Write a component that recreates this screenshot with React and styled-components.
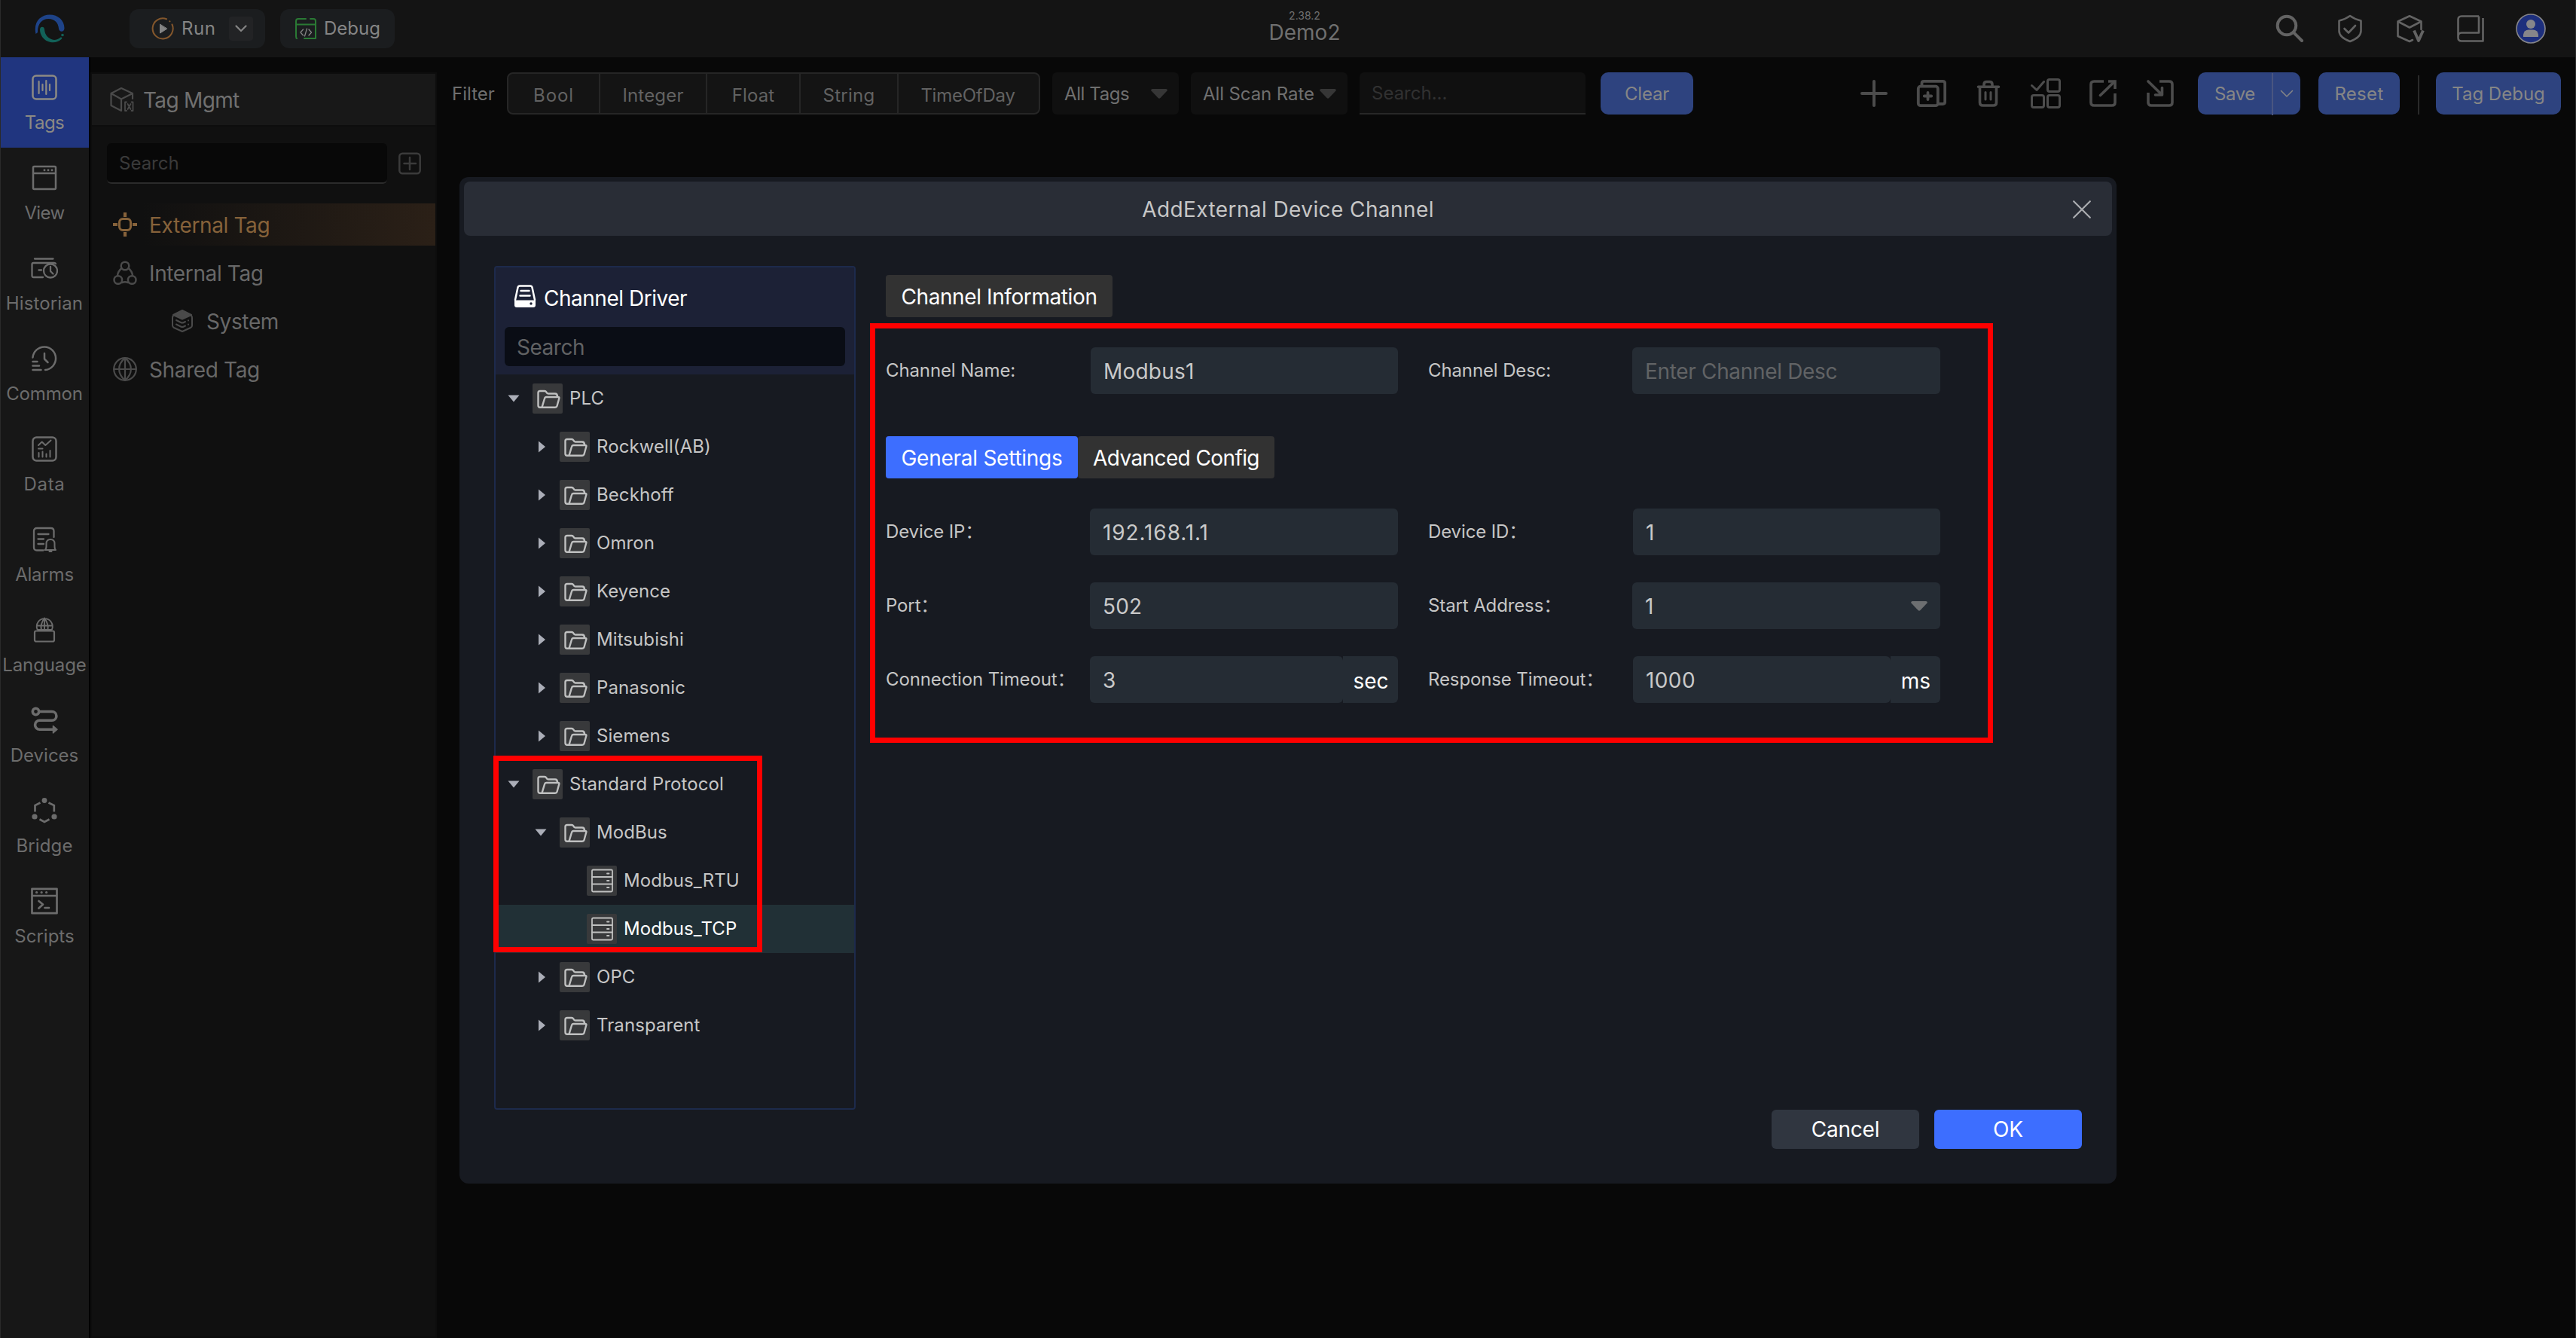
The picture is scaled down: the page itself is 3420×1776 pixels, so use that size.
import React from "react";
// Styles
import styled, { createGlobalStyle, css } from "styled-components";

// #region styled-components
const GlobalStyle = createGlobalStyle`
  * {
    box-sizing: border-box;
  }

  body {
    margin: 0;
    background: #080808;
    font-family: Inter, "Noto Sans CJK SC", sans-serif;
    font-size: 24px;
    line-height: 28px;
  }

  input,
  button {
    font: inherit;
    letter-spacing: inherit;
    border: 0;
    outline: 0;
  }

  svg {
    display: block;
    flex: none;
  }
`;

const Page = styled.div`
  position: relative;
  display: flex;
  flex-direction: column;
  width: 100%;
  height: 1776px;
  overflow: hidden;
  color: #6f6f6f;
  white-space: nowrap;

  &::after {
    content: "";
    position: absolute;
    inset: 0;
    border: solid #2a2a2a;
    border-width: 0 1px;
    pointer-events: none;
  }
`;

const TopBar = styled.header`
  display: grid;
  grid-template-columns: 1fr auto 1fr;
  height: 76px;
  padding-left: 44px;
  background: #141414;
`;

const TopLeft = styled.div`
  display: flex;
  align-items: center;
  gap: 20px;
  padding-left: 2px;
`;

const LogoBox = styled.div`
  width: 106px;
`;

const PillButton = styled.button`
  display: flex;
  align-items: center;
  gap: ${({ $gap }) => $gap};
  width: ${({ $width }) => $width};
  height: 52px;
  padding: ${({ $padding }) => $padding};
  border-radius: 12px;
  background: #1b1d1f;
  color: #858585;
  letter-spacing: ${({ $spacing }) => $spacing || 0};
`;

const PillArrow = styled.span`
  display: grid;
  place-items: center;
  width: 32px;
  height: 32px;
  margin-left: auto;
  border-radius: 4px;
  background: #222325;
`;

const ProjectTitle = styled.div`
  padding-top: 13px;
  text-align: center;
  font-size: 28px;

  small {
    display: block;
    font-size: 14px;
    line-height: 16px;
  }
`;

const TopActions = styled.div`
  display: flex;
  align-items: center;
  justify-content: flex-end;
  gap: 40px;
  padding-right: 40px;
  color: #636363;
`;

const Body = styled.div`
  display: flex;
  flex: 1;
  min-height: 0;
`;

const SideNav = styled.nav`
  width: 120px;
  border-right: 2px solid #000;
  background: #171717;
`;

const NavItem = styled.a`
  display: flex;
  flex-direction: column;
  align-items: center;
  gap: 13px;
  height: 120px;
  padding-top: 20px;
  letter-spacing: ${({ $spacing }) => $spacing || 0};
  background: ${({ $active }) => ($active ? "#20357f" : "transparent")};
  color: ${({ $active }) => ($active ? "#8c8a84" : "#6c6c6c")};
`;

const NavIcon = styled.span`
  display: grid;
  place-items: center;
  width: 40px;
  height: 40px;
`;

const TagPanel = styled.aside`
  width: 460px;
  margin-top: 20px;
  border: 2px solid #0d0d0d;
  background: #101010;
  font-size: 28px;
  line-height: 34px;
  letter-spacing: -0.37px;
`;

const TagPanelHead = styled.div`
  display: flex;
  align-items: center;
  gap: 12px;
  height: 70px;
  padding-left: 24px;
  border-bottom: 2px solid #0d0d0d;
  background: #181818;
  color: #707070;
  letter-spacing: -0.68px;

  svg {
    color: #4a4a4a;
  }
`;

const TagSearchRow = styled.div`
  display: flex;
  align-items: center;
  gap: 15px;
  padding: 22px 19px 26px 20px;
  color: #3b3b3b;
`;

const TagSearch = styled.input`
  width: 372px;
  height: 54px;
  padding: 0 16px;
  border-bottom: 2px solid #2b2b2b;
  border-radius: 6px;
  background: #080808;
  font-size: 24px;
  letter-spacing: 0;

  &::placeholder {
    color: #3a3a3a;
  }
`;

const TagItem = styled.div`
  display: flex;
  align-items: center;
  gap: ${({ $nested }) => ($nested ? "18px" : "16px")};
  height: 56px;
  margin-bottom: 8px;
  padding-left: ${({ $nested }) => ($nested ? "106px" : "28px")};
  color: #686868;

  svg {
    color: #4a4a4a;
  }

  ${({ $active }) =>
    $active &&
    css`
      background: linear-gradient(90deg, #101010 15%, #2b2017);
      color: #86623a;

      svg {
        color: #86623a;
      }
    `}
`;

const TagName = styled.span`
  padding-top: 2px;
`;

const Main = styled.main`
  flex: 1;
  padding: 20px 20px 0;
  background: #080808;
`;

const Toolbar = styled.div`
  display: flex;
  align-items: center;
  height: 56px;
`;

const FilterLabel = styled.span`
  width: 73px;
  padding-top: 1px;
`;

const TypeGroup = styled.div`
  display: flex;
  width: 708px;
  height: 56px;
  border: 2px solid #262626;
  border-radius: 8px;
  background: #141414;
  color: #626262;
`;

const TypeCell = styled.div`
  display: flex;
  align-items: center;
  justify-content: center;
  width: ${({ $width }) => $width}px;
  padding: 5px 2px 0 0;
  letter-spacing: ${({ $spacing }) => $spacing || 0};

  & + & {
    box-shadow: -2px 0 0 #262626;
  }
`;

const FilterSelect = styled.div`
  display: flex;
  align-items: center;
  justify-content: space-between;
  width: ${({ $width }) => $width}px;
  height: 56px;
  margin-left: 16px;
  padding: 1px 15px 0 16px;
  border-radius: 6px;
  background: #101010;
  letter-spacing: ${({ $spacing }) => $spacing || 0};

  svg {
    color: #363636;
  }
`;

const FilterSearch = styled.input`
  width: 300px;
  height: 56px;
  margin: 0 20px 0 16px;
  padding: 0 16px;
  border-bottom: 2px solid #272727;
  border-radius: 6px 6px 0 0;
  background: #101010;

  &::placeholder {
    color: #313131;
  }
`;

const ToolButton = styled.button`
  display: flex;
  align-items: center;
  justify-content: center;
  width: ${({ $width }) => $width}px;
  height: 56px;
  padding: 1px 0 0;
  border-radius: 10px;
  background: #2e437f;
  color: #868686;
  letter-spacing: ${({ $spacing }) => $spacing || 0};
`;

const SplitMain = styled.span`
  flex: 1;
`;

const SplitArrow = styled.span`
  display: grid;
  place-items: center;
  width: 38px;
  height: 56px;
  border-left: 2px solid #4a5681;
`;

const ToolIcons = styled.div`
  display: flex;
  gap: 36px;
  margin: 0 30px 0 auto;
  color: #4c4c4c;
`;

const ToolGroup = styled.div`
  display: flex;
  align-items: flex-end;
  gap: 24px;
`;

const ToolDivider = styled.i`
  width: 2px;
  height: 52px;
  margin-right: -2px;
  background: #2a2a2a;
`;

const Overlay = styled.div`
  position: absolute;
  inset: 0;
  display: flex;
  align-items: flex-start;
  justify-content: center;
  padding-top: 235px;
`;

const Modal = styled.section`
  position: relative;
  width: 2200px;
  height: 1336px;
  padding: 6px;
  border-radius: 12px;
  background: #171a21;
  color: #c6c6c6;
`;

const ModalHead = styled.div`
  display: grid;
  grid-template-columns: 1fr auto 1fr;
  align-items: center;
  height: 72px;
  padding: 2px 28px 0;
  border-radius: 8px;
  background: #292d36;
  font-size: 28px;
  letter-spacing: 0.41px;

  h2 {
    grid-column: 2;
    margin: 0;
    font: inherit;
  }

  svg {
    justify-self: end;
    color: #a9abaf;
  }
`;

const ModalBody = styled.div`
  display: flex;
  gap: 40px;
  padding: 40px 40px 0;
`;

const DriverPanel = styled.div`
  width: 480px;
  height: 1120px;
  border: 2px solid #1d2a4c;
  border-radius: 4px;
`;

const DriverHead = styled.div`
  height: 142px;
  padding: 0 12px;
  background: #1c2136;
  color: #fff;
  font-size: 28px;
  letter-spacing: -0.48px;
`;

const DriverTitle = styled.div`
  display: flex;
  align-items: center;
  gap: 10px;
  height: 79px;
  padding: 2px 0 0 12px;

  svg {
    margin-bottom: 5px;
  }
`;

const DriverSearch = styled.input`
  display: block;
  width: 452px;
  height: 52px;
  padding: 1px 16px 0;
  border-radius: 6px;
  background: #0a0d15;

  &::placeholder {
    color: #616264;
  }
`;

const TreeRow = styled.div`
  display: flex;
  align-items: center;
  height: 64px;
  padding-left: ${({ $level }) => 16 + $level * 36}px;
  background: ${({ $selected }) => ($selected ? "#213036" : "transparent")};
  color: ${({ $selected }) => ($selected ? "#fff" : "inherit")};
  letter-spacing: 0.08px;
`;

const TreeArrow = styled.span`
  display: grid;
  place-items: center;
  width: 16px;
  height: 16px;
  margin-right: 17px;
  padding-left: ${({ $open }) => ($open ? 0 : 2)}px;
  color: #abaeb8;
`;

const IconTile = styled.span`
  width: 40px;
  height: 40px;
  margin-right: 9px;
  border-radius: 2px;
  background: #38393b;
  color: #bfc0c0;
`;

const Form = styled.div`
  flex: 1;
  padding-top: 12px;
`;

const Tabs = styled.div`
  display: flex;
  margin-bottom: 40px;
`;

const Tab = styled.div`
  display: flex;
  align-items: center;
  justify-content: center;
  width: ${({ $width }) => $width}px;
  height: 56px;
  padding-top: 1px;
  border-radius: 4px;
  background: ${({ $active }) => ($active ? "#3d6eff" : "#323232")};
  color: #fff;
  font-size: 28px;
  letter-spacing: ${({ $spacing }) => $spacing};
`;

const FormGrid = styled.div`
  display: grid;
  grid-template-columns: 271px 409px 311px 409px;
  row-gap: 36px;
  align-items: center;
  margin-bottom: 56px;

  /* gutter between the two columns of fields */
  & > label:nth-of-type(even) {
    padding-left: 40px;
  }
`;

const FieldLabel = styled.label`
  letter-spacing: -0.12px;
`;

const FieldBox = styled.div`
  position: relative;
  display: flex;
  align-items: center;
  height: 62px;
  padding-left: ${({ $inset }) => $inset || 0}px;
  font-size: 28px;
`;

const FieldInput = styled.input`
  flex: 1;
  min-width: 0;
  height: 62px;
  padding: 1px 17px 0;
  border-radius: 6px;
  background: #252c34;
  color: #c9c9c9;
  letter-spacing: ${({ $spacing }) => $spacing || "0.2px"};

  &::placeholder {
    color: #616365;
    opacity: 1;
  }
`;

const FieldUnit = styled.span`
  display: grid;
  place-items: center;
  width: ${({ $width }) => $width}px;
  height: 62px;
  padding: 3px 0 0 1px;
  border-radius: 0 6px 6px 0;
  background: #252c34;
  color: #fff;
`;

/* Sits on top of the input */
const FieldArrow = styled.span`
  position: absolute;
  right: 17px;
  color: #6d6f71;
`;

const ModalFoot = styled.footer`
  display: flex;
  justify-content: flex-end;
  gap: 20px;
  padding-right: 40px;
`;

const FootButton = styled.button`
  width: 196px;
  height: 52px;
  border-radius: 6px;
  background: ${({ $primary }) => ($primary ? "#3d6eff" : "#303640")};
  color: #fff;
  font-size: 28px;
  letter-spacing: -0.2px;
`;

const Highlight = styled.div`
  position: absolute;
  left: ${({ $left }) => $left}px;
  top: ${({ $top }) => $top}px;
  width: ${({ $width }) => $width}px;
  height: ${({ $height }) => $height}px;
  border: 7px solid #ff0000;
`;
// #endregion

// #region icons
const Icon = ({ w = 40, h = w, sw = 2.5, children }) => (
  <svg
    width={w}
    height={h}
    viewBox={`0 0 ${w} ${h}`}
    fill="none"
    stroke="currentColor"
    strokeWidth={sw}
    strokeLinecap="round"
    strokeLinejoin="round"
  >
    {children}
  </svg>
);

const Logo = () => (
  <svg width="41" height="38" viewBox="0 0 41 38">
    <path
      fill="#1e4388"
      d="M1.5 26C-2 10 8 0.5 20 0.5C31 0.5 39.5 8 39.5 18.5C39.5 24 32.5 24 32 19C31.5 11 26 6 18.5 6C9 6 3.5 14 4 24Z"
    />
    <path
      fill="#126158"
      d="M7 20C7 15.5 13 15.5 13 20C13.5 28 19 33 26 34C29 34 32 32.5 34.5 30.5C36.5 30 37 31.5 35.5 33C31 37 26 38 21 37C12 35 7 28 7 20Z"
    />
    <circle cx="37" cy="27.5" r="1.8" fill="#126158" />
  </svg>
);

const RunIcon = () => (
  <Icon w={30} sw={2}>
    <path d="M20 2.3A13.5 13.5 0 1 0 27.5 9.5" stroke="#84572c" />
    <path d="M24.3 5.2l.2.2" stroke="#84572c" />
    <path d="M11.5 9.5v11.5l9-5.7z" fill="currentColor" strokeWidth="1" />
  </Icon>
);

const DebugIcon = () => (
  <Icon w={28} sw={2}>
    <path
      d="M14 1H4Q1 1 1 4V24Q1 26.500 2 27M20 1H24Q27 1 27 4V27H12M1 8.5H27"
      stroke="#2a7a34"
    />
    <path
      d="M10.5 15L7 19l3.5 4M18 15l3.5 4-3.5 4M15.5 14l-3 10"
      strokeWidth="1.3"
    />
  </Icon>
);

const ChevronDown = ({ w = 16, sw = 2.2 }) => (
  <Icon w={w} h={w / 2 + 2} sw={sw}>
    <path d={`M1.5 1.5L${w / 2} ${w / 2}L${w - 1.5} 1.5`} />
  </Icon>
);

const Caret = () => (
  <svg width="22" height="13" viewBox="0 0 22 13">
    <path
      fill="currentColor"
      d="M2 0H20Q22.5 0.5 21.5 2.5L12.5 12Q11 13.5 9.5 12L.5 2.5Q-.5 .5 2 0Z"
    />
  </svg>
);

const TreeDown = () => (
  <svg width="16" height="10" viewBox="0 0 16 10">
    <path d="M0.5 0.5H15.5L8 9.5Z" fill="currentColor" />
  </svg>
);

const TreeRight = () => (
  <svg width="10" height="16" viewBox="0 0 10 16">
    <path d="M1 0.5V15.5L10 8Z" fill="currentColor" />
  </svg>
);

const SearchIcon = () => (
  <Icon sw={4}>
    <circle cx="16" cy="16" r="12.3" />
    <path d="M25 25L36 36" />
  </Icon>
);

const ShieldIcon = () => (
  <Icon sw={2.6}>
    <path d="M20 3C16 6 10 8.5 5.5 9.5V23C5.5 29 12 34 20 37C28 34 34.5 29 34.5 23V9.5C30 8.5 24 6 20 3Z" />
    <path d="M12.5 20L18 25.5L27 16" />
  </Icon>
);

const VersionIcon = () => (
  <Icon sw={2.6}>
    <path d="M34.5 21V10.5L19 3.2L3.5 10.5V30L19 37L23 35M3.5 10.5L19 18.5L34.5 10.5" />
    <path d="M25 22.5L31 36L37 22.5" strokeWidth="3.8" strokeLinecap="butt" />
  </Icon>
);

const BookIcon = () => (
  <Icon sw={2.6}>
    <path
      d="M31 3.500H8Q3.5 3.5 3.5 8V32Q3.5 36.5 8 36.5H36.5V6M31 3.5V25.5H8Q3.5 25.5 3.5 31"
      strokeLinecap="butt"
    />
  </Icon>
);

const Avatar = () => (
  <svg width="40" height="40" viewBox="0 0 40 40">
    <circle cx="20" cy="20" r="19" fill="#1d2f7d" stroke="#86868a" strokeWidth="1.6" />
    <circle cx="20" cy="14" r="6" fill="#86868a" />
    <path d="M10 31V28Q11 21.5 17 21.5H23Q29 21.5 30 28V31Z" fill="#86868a" />
  </svg>
);

const PlusIcon = () => (
  <Icon sw={4}>
    <path d="M20 4V36M4 20H36" />
  </Icon>
);

const CopyIcon = () => (
  <Icon sw={3.8}>
    <rect x="2.8" y="10.7" width="26" height="25.5" rx="3" />
    <path d="M7.5 9V6.5Q7.5 3.9 10 3.9H35.5Q38.2 3.9 38.2 7V31Q38.2 34 35.5 34H30" />
    <path d="M10.8 23.5H20.2M15.5 19V28" />
  </Icon>
);

const TrashIcon = () => (
  <Icon sw={3.6}>
    <path d="M6.5 11.3H33.5M14 11V8Q14 4.5 17.5 4.5H21.5Q25 4.5 25 8V11M8.5 12V32Q8.5 36 12.5 36H26.5Q30.5 36 30.5 32V12" />
    <path d="M16 18.5V28M23 18.5V28" strokeWidth="3" />
  </Icon>
);

const BatchIcon = () => (
  <Icon sw={3}>
    <path d="M1.5 9.5L8 15.5L17.5 4.5" />
    <rect x="22.5" y="1.5" width="16" height="16" rx="2.5" />
    <rect x="1.5" y="22.5" width="16" height="16" rx="2.5" />
    <rect x="22.5" y="22.5" width="16" height="16" rx="2.5" />
  </Icon>
);

const ExportIcon = () => (
  <Icon sw={3.6}>
    <path
      d="M21 4H8Q4 4 4 8V32Q4 36 8 36H32Q36 36 36 32V20M27 4H36V14"
      strokeLinecap="butt"
      strokeLinejoin="miter"
    />
    <path d="M16.5 22.5L35 4.5" />
  </Icon>
);

const ImportIcon = () => (
  <Icon sw={3.6}>
    <path
      d="M19 4H32Q36 4 36 8V32Q36 36 32 36H8Q4 36 4 32V19"
      strokeLinecap="butt"
    />
    <path d="M4 4L22 21.5M13.5 22H22.5V12.5" />
  </Icon>
);

const AddBoxIcon = () => (
  <Icon w={30}>
    <rect x="1.3" y="1.8" width="27.4" height="26.4" rx="4" />
    <path d="M15 7V23M7.5 15H23" />
  </Icon>
);

const CloseIcon = () => (
  <Icon w={24} sw={2.2}>
    <path d="M1.2 1.2L22.8 22.8M22.8 1.2L1.2 22.8" />
  </Icon>
);

const TagMgmtIcon = () => (
  <Icon w={32} sw={2.2}>
    <path d="M30 15V8L15 1L1.5 8V24L15 31V15.5L1.5 8M15 15.5L30 8" />
    <path
      d="M22 19.5H20V31H22M28.5 19.5H30.5V31H28.5M23.5 22L27.5 29M27.5 22L23.5 29"
      strokeWidth="1.8"
    />
  </Icon>
);

const ExternalIcon = () => (
  <Icon w={32} sw={3}>
    <rect x="8.5" y="8.5" width="15" height="15" rx="4.5" />
    <path
      d="M16 0V6M16 26V32M0 16H6M26 16H32"
      strokeWidth="4.2"
      strokeLinecap="butt"
    />
  </Icon>
);

const InternalIcon = () => (
  <Icon w={32}>
    <circle cx="16" cy="7" r="5.3" />
    <circle cx="6.8" cy="25.5" r="5.3" />
    <circle cx="25.2" cy="25.5" r="5.3" />
    <path d="M11.5 10Q6.5 14 6 20M20.5 10Q25.5 14 26 20M12 29Q16 27.5 20 29" />
  </Icon>
);

const SystemIcon = () => (
  <Icon w={28} h={30} sw={2}>
    <path d="M14 1L26 7L14 12.5L2 7Z" fill="currentColor" />
    <path d="M2 8Q1 9 1 11V21Q1 23 3 24L14 29L25 24Q27 23 27 21V11Q27 9 26 8M6 14L12 17Q14 18 16 17L18 16M22 14.3v.1M6 19.5L12 22.5Q14 23.5 16 22.5L18 21.5M22 19.6v.1" />
  </Icon>
);

const GlobeIcon = () => (
  <Icon w={32} sw={2.2}>
    <circle cx="16" cy="16" r="14.8" />
    <path d="M16 1.2V30.8M1.2 16H30.8M16 1.2C5.5 10 5.5 22 16 30.8M16 1.2C26.5 10 26.5 22 16 30.8" />
  </Icon>
);

const DriveIcon = () => (
  <Icon w={30}>
    <path d="M2 20L5.5 3.5Q6 1.5 8 1.5H22Q24 1.5 24.5 3.5L28 20" />
    <path d="M9.5 8H20.5M8.5 14.5H21.5" />
    <path
      d="M1 20.5H29V27Q29 30 26 30H4Q1 30 1 27Z"
      fill="currentColor"
      stroke="none"
    />
    <circle cx="23" cy="25" r="1.7" fill="#1c2136" stroke="none" />
  </Icon>
);

const FolderIcon = () => (
  <Icon sw={2.4}>
    <path d="M12.5 31.7H10Q7.5 31.7 7.5 29V12.5Q7.5 10 10 10H16Q17.5 10 18.3 11.3L19 12.5Q19.8 13.5 21 13.5H30Q33 13.5 33 17.5" />
    <path d="M12.5 31.7L16 20Q16.5 18 18.5 18H34Q35.8 18 35.3 19.8L32.5 30Q32 31.7 30 31.7Z" />
  </Icon>
);

const ServerIcon = () => (
  <Icon sw={1.8}>
    <rect x="7" y="5.5" width="27" height="29" rx="1.5" />
    <path d="M7 15H34M7 24.5H34M27 10.5H29.5M27 20H29.5M27 29H29.5" />
  </Icon>
);

const TagsIcon = () => (
  <Icon w={34}>
    <rect x="1.5" y="1.5" width="31" height="31" rx="4.5" />
    <path
      d="M9.6 9V25M14.5 13V21M19.3 8V26M24 13V21"
      strokeWidth="2.2"
    />
  </Icon>
);

const ViewIcon = () => (
  <Icon w={34}>
    <path d="M2 3.5Q2 2 3.5 2H30.5Q32 2 32 3.5V30.5Q32 32 30.5 32H3.5Q2 32 2 30.5ZM2 11H32" />
    <path d="M17 6.7v.1M22 6.7v.1M27 6.7v.1" strokeWidth="3" />
  </Icon>
);

const HistorianIcon = () => (
  <Icon w={36} h={28} sw={2.3}>
    <path d="M5 1.5H29.5M16 26H3.5Q1.5 26 1.5 24V9Q1.5 7 3.5 7H31Q32.5 7 33 8M10.5 16.5H14" />
    <circle cx="26" cy="17.5" r="9" />
    <path d="M26 12V18L29.5 21.5" />
  </Icon>
);

const CommonIcon = () => (
  <Icon w={34}>
    <path d="M1.5 15.5A15.3 15.3 0 1 1 18 32M17 10V17.5L21.5 22M1.5 21H7.5M1.5 26.5H10M1.5 32H12.5" />
  </Icon>
);

const DataIcon = () => (
  <Icon w={34}>
    <rect x="1.5" y="1.5" width="31" height="31" rx="5" />
    <path
      d="M9 12L13.7 7.5L18.3 12L25.5 5.5M9 16.5H14.5M9.5 22V27.5M14.5 20.5V27.5M19.5 23.5V27.5M24.5 19V27.5"
      strokeWidth="2"
    />
  </Icon>
);

const AlarmsIcon = () => (
  <Icon w={32} h={34} sw={2.3}>
    <path d="M14.5 31.5H6Q2 31.5 2 27.5V6Q2 2 6 2H24.5Q28.5 2 28.5 6V14M7.5 10H21.5M7.5 16.5H15M7.5 23H15" />
    <path
      d="M16.5 31Q18.5 30 18.5 26V22.5Q18.5 17 24 17Q29.5 17 29.5 22.5V26Q29.5 30 31 31ZM22.5 33H25.5"
      strokeWidth="2"
    />
  </Icon>
);

const LanguageIcon = () => (
  <Icon w={30} h={34} sw={2.2}>
    <rect x="2" y="18.5" width="26" height="14" rx="2" />
    <path
      d="M5.5 16.5A10.5 10.5 0 1 1 25 16.5M5 11.5H25.5M11 17Q9 10 15 1.5Q21 10 19.5 17M15 1.5V17M6.5 17H24"
      strokeWidth="1.9"
    />
  </Icon>
);

const DevicesIcon = () => (
  <Icon w={36} sw={3.6}>
    <circle cx="6.5" cy="6.5" r="4.2" />
    <path d="M11 6.5H28A5.9 5.9 0 0 1 28 18.3H11.5A5.9 5.9 0 0 0 11.5 30.2H29" />
    <path
      d="M29.5 25.5V35L35 30.2Z"
      fill="currentColor"
      strokeWidth="1.5"
    />
  </Icon>
);

const BridgeIcon = () => (
  <Icon w={34} sw={2.7}>
    <path
      d="M11.5 6.5L4.5 10V18.5M22.5 6.5L29.8 10V18.5M10.5 28.5L17 32L23.5 28.5"
      strokeLinecap="butt"
      strokeLinejoin="miter"
    />
    <g fill="currentColor" stroke="none">
      <circle cx="17" cy="3.5" r="3.4" />
      <circle cx="4" cy="25" r="3.6" />
      <circle cx="30" cy="25" r="3.6" />
    </g>
  </Icon>
);

const ScriptsIcon = () => (
  <Icon w={36} sw={2.7}>
    <path d="M1.5 1.8H34.5V34.2H1.5ZM1.5 11H34.5M10.5 18L16 22.5L10.5 27.5M18.5 27H24" />
    <path d="M7.5 6.5h.3M14 6.5h.3M20.5 6.5h.3" strokeWidth="3" />
  </Icon>
);
// #endregion

// #region data
const navItems = [
  { label: "Tags", icon: <TagsIcon />, active: true, spacing: "-0.5px" },
  { label: "View", icon: <ViewIcon />, spacing: "-0.6px" },
  { label: "Historian", icon: <HistorianIcon />, spacing: "0.12px" },
  { label: "Common", icon: <CommonIcon />, spacing: "-0.17px" },
  { label: "Data", icon: <DataIcon />, spacing: "0.7px" },
  { label: "Alarms", icon: <AlarmsIcon />, spacing: "-0.2px" },
  { label: "Language", icon: <LanguageIcon />, spacing: "-0.1px" },
  { label: "Devices", icon: <DevicesIcon /> },
  { label: "Bridge", icon: <BridgeIcon />, spacing: "0.13px" },
  { label: "Scripts", icon: <ScriptsIcon /> },
];

const tagItems = [
  { label: "External Tag", icon: <ExternalIcon />, active: true },
  { label: "Internal Tag", icon: <InternalIcon /> },
  { label: "System", icon: <SystemIcon />, nested: true },
  { label: "Shared Tag", icon: <GlobeIcon /> },
];

const typeFilters = [
  { label: "Bool", width: 122, spacing: "0.9px" },
  { label: "Integer", width: 142, spacing: "0.18px" },
  { label: "Float", width: 124, spacing: "0.13px" },
  { label: "String", width: 130, spacing: "0.27px" },
  { label: "TimeOfDay", width: 186, spacing: "-0.25px" },
];

const drivers = [
  { label: "PLC", level: 0, open: true },
  { label: "Rockwell(AB)", level: 1 },
  { label: "Beckhoff", level: 1 },
  { label: "Omron", level: 1 },
  { label: "Keyence", level: 1 },
  { label: "Mitsubishi", level: 1 },
  { label: "Panasonic", level: 1 },
  { label: "Siemens", level: 1 },
  { label: "Standard Protocol", level: 0, open: true },
  { label: "ModBus", level: 1, open: true },
  { label: "Modbus_RTU", level: 2 },
  { label: "Modbus_TCP", level: 2, selected: true },
  { label: "OPC", level: 1 },
  { label: "Transparent", level: 1 },
];
// #endregion

// #region components
const Header = () => (
  <TopBar>
    <TopLeft>
      <LogoBox>
        <Logo />
      </LogoBox>
      <PillButton
        $width="180px"
        $gap="10px"
        $padding="0 16px 0 29px"
        $spacing="0.6px"
      >
        <RunIcon />
        Run
        <PillArrow>
          <ChevronDown />
        </PillArrow>
      </PillButton>
      <PillButton $width="152px" $gap="10px" $padding="0 0 0 20px">
        <DebugIcon />
        Debug
      </PillButton>
    </TopLeft>
    <ProjectTitle>
      <small>2.38.2</small>
      Demo2
    </ProjectTitle>
    <TopActions>
      <SearchIcon />
      <ShieldIcon />
      <VersionIcon />
      <BookIcon />
      <Avatar />
    </TopActions>
  </TopBar>
);

const Navigation = () => (
  <SideNav>
    {navItems.map(({ label, icon, active, spacing }) => (
      <NavItem key={label} $active={active} $spacing={spacing}>
        <NavIcon>{icon}</NavIcon>
        {label}
      </NavItem>
    ))}
  </SideNav>
);

const TagManagement = () => (
  <TagPanel>
    <TagPanelHead>
      <TagMgmtIcon />
      <TagName>Tag Mgmt</TagName>
    </TagPanelHead>
    <TagSearchRow>
      <TagSearch placeholder="Search" />
      <AddBoxIcon />
    </TagSearchRow>
    {tagItems.map(({ label, icon, active, nested }) => (
      <TagItem key={label} $active={active} $nested={nested}>
        {icon}
        <TagName>{label}</TagName>
      </TagItem>
    ))}
  </TagPanel>
);

const FilterBar = () => (
  <Toolbar>
    <FilterLabel>Filter</FilterLabel>
    <TypeGroup>
      {typeFilters.map(({ label, width, spacing }) => (
        <TypeCell key={label} $width={width} $spacing={spacing}>
          {label}
        </TypeCell>
      ))}
    </TypeGroup>
    <FilterSelect $width={168} $spacing="-0.4px">
      All Tags
      <Caret />
    </FilterSelect>
    <FilterSelect $width={208} $spacing="-0.1px">
      All Scan Rate
      <Caret />
    </FilterSelect>
    <FilterSearch placeholder="Search..." />
    <ToolButton $width={123} $spacing="-0.2px">
      Clear
    </ToolButton>
    <ToolIcons>
      <PlusIcon />
      <CopyIcon />
      <TrashIcon />
      <BatchIcon />
      <ExportIcon />
      <ImportIcon />
    </ToolIcons>
    <ToolGroup>
      <ToolButton $width={136} $spacing="-0.4px">
        <SplitMain>Save</SplitMain>
        <SplitArrow>
          <ChevronDown w={18} sw={1.5} />
        </SplitArrow>
      </ToolButton>
      <ToolButton $width={108} $spacing="0.3px">
        Reset
      </ToolButton>
      <ToolDivider />
      <ToolButton $width={166}>Tag Debug</ToolButton>
    </ToolGroup>
  </Toolbar>
);

const DriverTree = () => (
  <DriverPanel>
    <DriverHead>
      <DriverTitle>
        <DriveIcon />
        Channel Driver
      </DriverTitle>
      <DriverSearch placeholder="Search" />
    </DriverHead>
    {drivers.map(({ label, level, open, selected }) => (
      <TreeRow key={label} $level={level} $selected={selected}>
        <TreeArrow $open={open}>
          {level < 2 && (open ? <TreeDown /> : <TreeRight />)}
        </TreeArrow>
        <IconTile>{level < 2 ? <FolderIcon /> : <ServerIcon />}</IconTile>
        {label}
      </TreeRow>
    ))}
  </DriverPanel>
);

const Field = ({ label, inset, unit, unitWidth, select, ...input }) => (
  <>
    <FieldLabel>{label}</FieldLabel>
    <FieldBox $inset={inset}>
      <FieldInput {...input} />
      {unit && <FieldUnit $width={unitWidth}>{unit}</FieldUnit>}
      {select && (
        <FieldArrow>
          <Caret />
        </FieldArrow>
      )}
    </FieldBox>
  </>
);

const ChannelForm = () => (
  <Form>
    <Tabs>
      <Tab $width={301} $spacing="-0.4px">
        Channel Information
      </Tab>
    </Tabs>
    <FormGrid>
      <Field label="Channel Name:" defaultValue="Modbus1" inset={1} />
      <Field
        label="Channel Desc:"
        placeholder="Enter Channel Desc"
        $spacing="-0.33px"
      />
    </FormGrid>
    <Tabs>
      <Tab $active $width={255} $spacing="-0.26px">
        General Settings
      </Tab>
      <Tab $width={261} $spacing="-0.6px">
        Advanced Config
      </Tab>
    </Tabs>
    <FormGrid>
      <Field
        label="Device IP："
        defaultValue="192.168.1.1"
        $spacing="0.9px"
      />
      <Field label="Device ID：" defaultValue="1" inset={1} />
      <Field label="Port：" defaultValue="502" />
      <Field label="Start Address：" defaultValue="1" select />
      <Field
        label="Connection Timeout："
        defaultValue="3"
        unit="sec"
        unitWidth={73}
      />
      <Field
        label="Response Timeout："
        defaultValue="1000"
        inset={1}
        $spacing="0.4px"
        unit="ms"
        unitWidth={66}
      />
    </FormGrid>
  </Form>
);

const ChannelModal = () => (
  <Overlay>
    <Modal>
      <ModalHead>
        <h2>AddExternal Device Channel</h2>
        <CloseIcon />
      </ModalHead>
      <ModalBody>
        <DriverTree />
        <ChannelForm />
      </ModalBody>
      <ModalFoot>
        <FootButton>Cancel</FootButton>
        <FootButton $primary>OK</FootButton>
      </ModalFoot>
      <Highlight $left={45} $top={768} $width={357} $height={261} />
      <Highlight $left={545} $top={194} $width={1491} $height={557} />
    </Modal>
  </Overlay>
);

const App = () => {
  return (
    <>
      <GlobalStyle />
      <Page>
        <Header />
        <Body>
          <Navigation />
          <TagManagement />
          <Main>
            <FilterBar />
          </Main>
        </Body>
        <ChannelModal />
      </Page>
    </>
  );
};
// #endregion

export default App;
